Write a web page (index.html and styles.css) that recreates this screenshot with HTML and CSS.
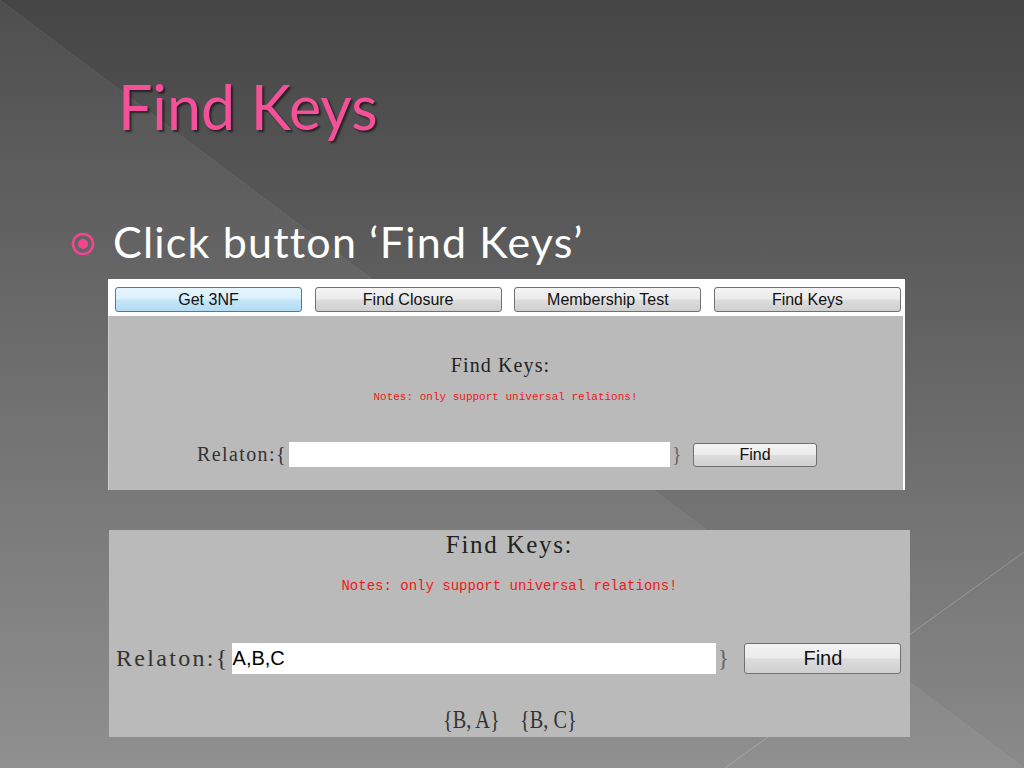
FILE: index.html
```html
<!DOCTYPE html>
<html>
<head>
<meta charset="utf-8">
<title>Find Keys</title>
<link rel="stylesheet" href="styles.css">
</head>
<body>
<div class="slide">
  <svg class="deco" width="1024" height="768" viewBox="0 0 1024 768">
    <line x1="1024" y1="552" x2="725" y2="768" stroke="rgba(255,255,255,0.22)" stroke-width="1"/>
    <line x1="0" y1="0" x2="1024" y2="768" stroke="rgba(255,255,255,0.06)" stroke-width="1"/>
  </svg>
  <h1 class="title">Find Keys</h1>
  <div class="bullet-row">
    <svg class="bullet" width="24" height="24" viewBox="0 0 24 24">
      <circle cx="12" cy="12" r="10" fill="none" stroke="#f0468f" stroke-width="2.6"/>
      <circle cx="12" cy="12" r="5" fill="#f0468f"/>
    </svg>
    <span class="bullet-text">Click button ‘Find Keys’</span>
  </div>

  <div class="panel panel-one">
    <div class="tabs">
      <div class="btn btn-active">Get 3NF</div>
      <div class="btn">Find Closure</div>
      <div class="btn">Membership Test</div>
      <div class="btn">Find Keys</div>
    </div>
    <div class="panel-body body-one">
      <div class="heading h-one">Find Keys:</div>
      <div class="notes n-one">Notes: only support universal relations!</div>
      <div class="row row-one">
        <span class="label">Relaton:{</span>
        <span class="input"></span>
        <span class="brace">}</span>
        <span class="btn find">Find</span>
      </div>
    </div>
  </div>

  <div class="panel panel-two">
    <div class="heading h-two">Find Keys:</div>
    <div class="notes n-two">Notes: only support universal relations!</div>
    <div class="row row-two">
      <span class="label">Relaton:{</span>
      <span class="input">A,B,C</span>
      <span class="brace">}</span>
      <span class="btn find">Find</span>
    </div>
    <div class="results">
      <span class="key">{B, A}</span>
      <span class="key">{B, C}</span>
    </div>
  </div>
</div>
</body>
</html>
```

FILE: styles.css
```css
html, body {
  margin: 0;
  padding: 0;
}
body {
  width: 1024px;
  height: 768px;
  overflow: hidden;
  background: #454545;
}
.slide {
  position: relative;
  width: 1024px;
  height: 768px;
  overflow: hidden;
  display: flex;
  flex-direction: column;
  background:
    linear-gradient(to top right, rgba(255,255,255,0.05) 50%, rgba(255,255,255,0) 50%),
    linear-gradient(to bottom, #454545 0%, #8a8a8a 100%);
}
.deco {
  position: absolute;
  left: 0;
  top: 0;
  pointer-events: none;
}
.title {
  margin: 76px 0 0 118px;
  font-family: "Lato", "Liberation Sans", sans-serif;
  font-weight: 400;
  font-size: 61px;
  line-height: 61px;
  color: #f5509a;
  text-shadow: 2px 2px 2px rgba(0,0,0,0.55);
  position: relative;
}
.bullet-row {
  margin: 83px 0 0 71px;
  display: flex;
  align-items: center;
  height: 43px;
  position: relative;
}
.bullet {
  margin-top: 4px;
}
.bullet-text {
  margin-left: 18px;
  font-family: "Lato", "Liberation Sans", sans-serif;
  font-weight: 400;
  font-size: 43px;
  line-height: 43px;
  letter-spacing: 1.2px;
  color: #ffffff;
}
.panel {
  position: relative;
  background: #bababa;
  display: flex;
  flex-direction: column;
}
.panel-one {
  margin: 16px 0 0 108px;
  width: 795px;
  height: 211px;
  border-right: 2px solid #ffffff;
  box-shadow: inset 1px 0 0 #cfcfcf;
}
.tabs {
  height: 37px;
  background: #ffffff;
  display: flex;
  justify-content: space-between;
  align-items: flex-start;
  padding: 8px 2px 0 7px;
  box-sizing: border-box;
}
.btn {
  box-sizing: border-box;
  display: flex;
  align-items: center;
  justify-content: center;
  border: 1px solid #707070;
  border-radius: 3px;
  background: linear-gradient(to bottom, #f3f3f3 0%, #ebebeb 48%, #dddddd 52%, #cfcfcf 100%);
  font-family: "Liberation Sans", Arial, sans-serif;
  color: #111111;
}
.tabs .btn {
  width: 187px;
  height: 25px;
  font-size: 16px;
}
.tabs .btn-active {
  border-color: #3c7fb1;
  background: linear-gradient(to bottom, #e6f5fd 0%, #d9f0fc 48%, #c3e6f8 52%, #b3dcf3 100%);
}
.body-one {
  flex: 1;
}
.heading {
  font-family: "Liberation Serif", "Times New Roman", serif;
  color: #222222;
  text-align: center;
}
.h-one {
  margin-top: 37px;
  font-size: 20px;
  line-height: 24px;
  letter-spacing: 1.1px;
  padding-right: 10px;
}
.notes {
  font-family: "Liberation Mono", "Courier New", monospace;
  color: #f01818;
  text-align: center;
}
.n-one {
  margin-top: 13px;
  font-size: 11px;
  line-height: 14px;
}
.row {
  display: flex;
  align-items: center;
}
.label, .brace {
  font-family: "Liberation Serif", "Times New Roman", serif;
  color: #333333;
}
.brace {
  color: #666666;
}
.input {
  background: #ffffff;
  box-sizing: border-box;
  display: flex;
  align-items: center;
  font-family: "Liberation Sans", Arial, sans-serif;
  color: #000000;
}
.row-one {
  margin-top: 38px;
  height: 25px;
  padding-left: 89px;
}
.row-one .label, .row-one .brace {
  font-size: 20px;
  line-height: 25px;
  letter-spacing: 1.4px;
}
.row-one .input {
  margin-left: 2px;
  width: 381px;
  height: 25px;
}
.row-one .brace {
  margin-left: 2px;
}
.row-one .find {
  margin-left: 10px;
  width: 124px;
  height: 24px;
  font-size: 16px;
}
.panel-two {
  margin: 40px 0 0 109px;
  width: 801px;
  height: 207px;
}
.h-two {
  font-size: 25px;
  line-height: 30px;
  letter-spacing: 1.7px;
}
.n-two {
  margin-top: 17px;
  font-size: 14px;
  line-height: 18px;
}
.row-two {
  margin-top: 48px;
  height: 31px;
  padding-left: 7px;
}
.row-two .label, .row-two .brace {
  font-size: 24px;
  line-height: 31px;
  letter-spacing: 2.3px;
}
.row-two .input {
  margin-left: 2px;
  width: 484px;
  height: 31px;
  padding-left: 1px;
  font-size: 20px;
}
.row-two .brace {
  margin-left: 2px;
}
.row-two .find {
  margin-left: 13px;
  width: 157px;
  height: 31px;
  font-size: 20px;
}
.results {
  margin-top: 31px;
  display: flex;
  justify-content: center;
  gap: 4px;
  height: 30px;
}
.key {
  display: inline-block;
  font-family: "Liberation Serif", "Times New Roman", serif;
  font-size: 26px;
  line-height: 30px;
  color: #333333;
  transform: scaleX(0.78);
}
```
